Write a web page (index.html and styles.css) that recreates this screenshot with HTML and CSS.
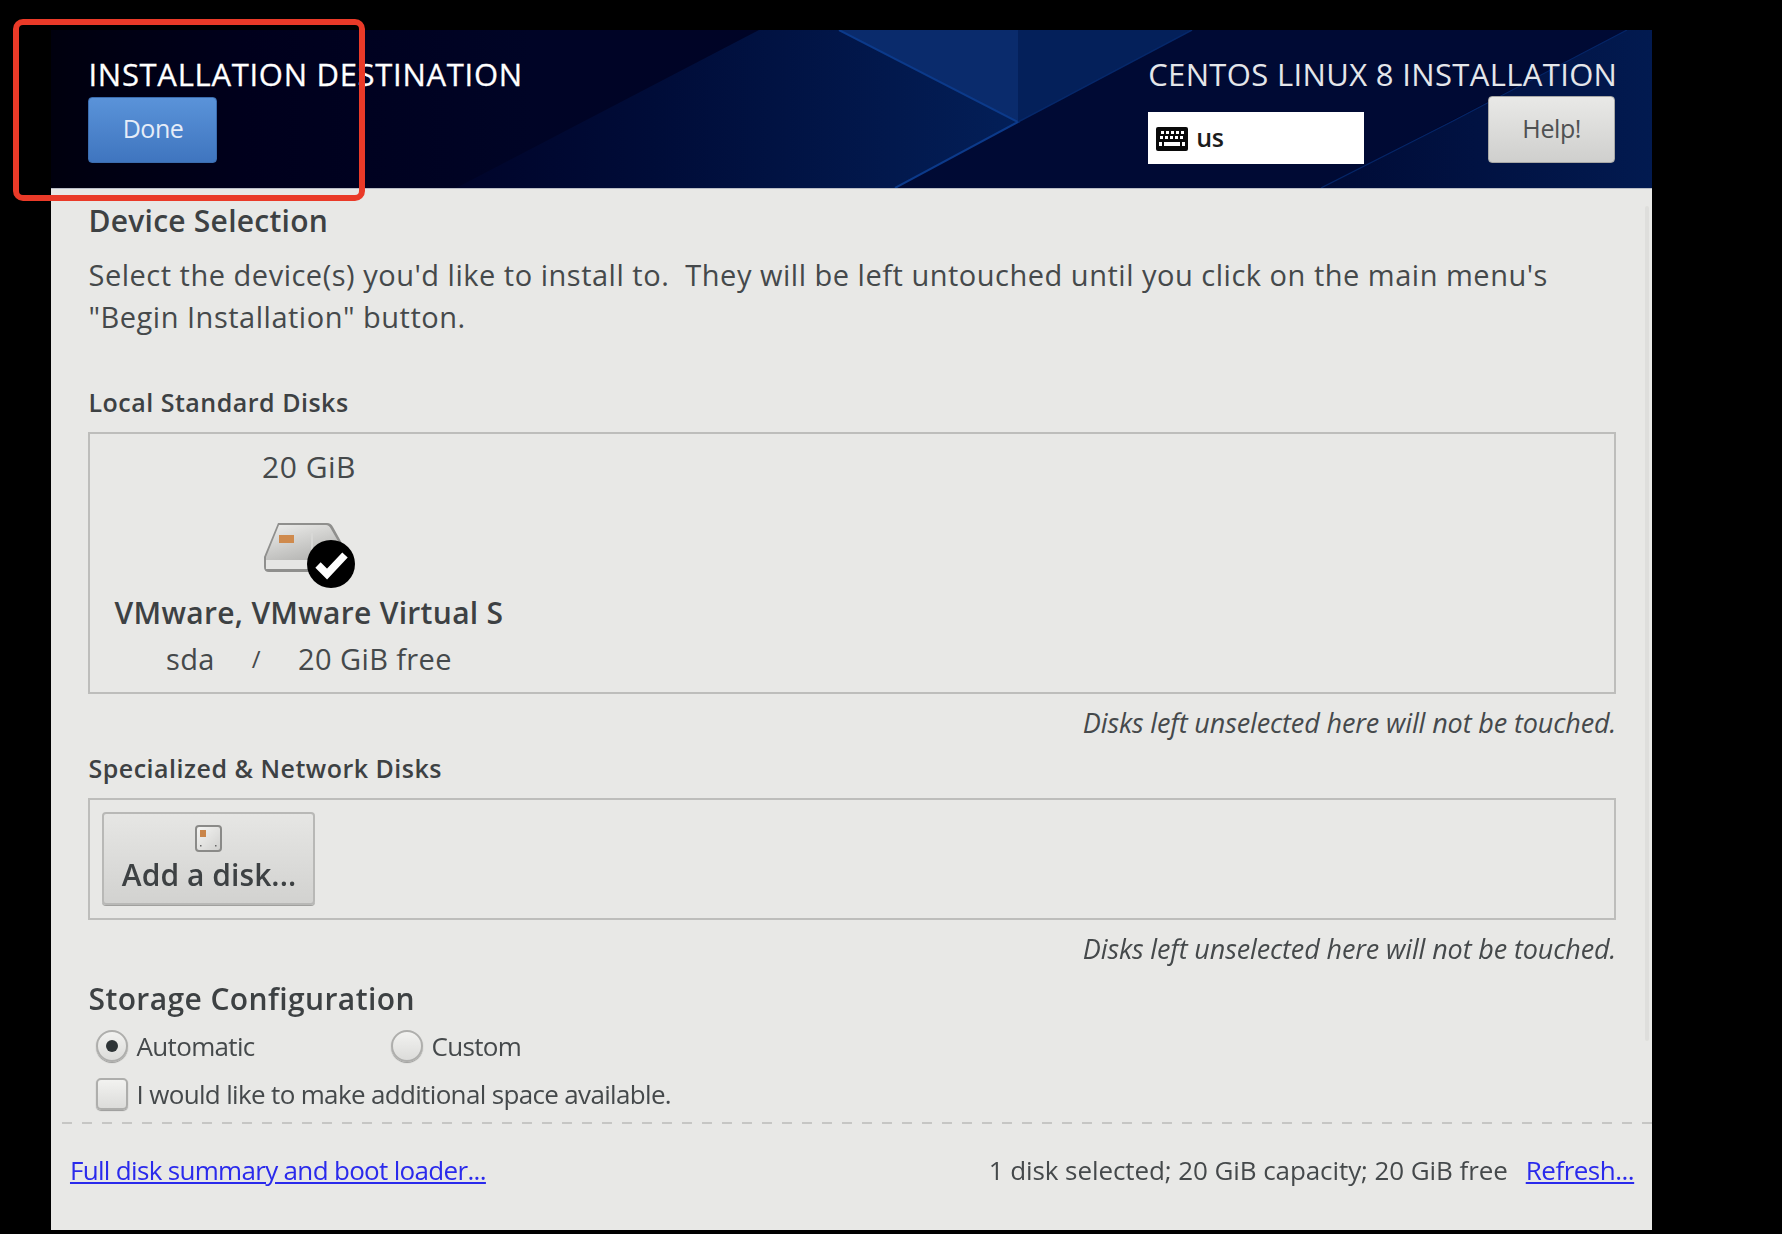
FILE: index.html
```html
<!DOCTYPE html>
<html lang="en">
<head>
<meta charset="utf-8">
<title>Installation Destination</title>
<link rel="stylesheet" href="styles.css">
</head>
<body>
<div class="window">
  <header class="topbar">
    <svg class="topbar-art" viewBox="0 0 1601 158" preserveAspectRatio="none" aria-hidden="true">
      <defs>
        <linearGradient id="bgGrad" x1="0" y1="0" x2="1" y2="0">
          <stop offset="0" stop-color="#00000e"/>
          <stop offset="0.12" stop-color="#00001c"/>
          <stop offset="0.3" stop-color="#000426"/>
          <stop offset="1" stop-color="#000426"/>
        </linearGradient>
        <linearGradient id="midGrad" x1="405" y1="0" x2="967" y2="0" gradientUnits="userSpaceOnUse">
          <stop offset="0" stop-color="#00042a"/>
          <stop offset="0.35" stop-color="#000c38"/>
          <stop offset="1" stop-color="#031f58"/>
        </linearGradient>
        <linearGradient id="rightGrad" x1="1270" y1="0" x2="1601" y2="0" gradientUnits="userSpaceOnUse">
          <stop offset="0" stop-color="#000b36"/>
          <stop offset="1" stop-color="#021a50"/>
        </linearGradient>
      </defs>
      <rect width="1601" height="158" fill="url(#bgGrad)"/>
      <polygon points="405,158 708,0 788,0 967,92 844,158" fill="url(#midGrad)"/>
      <polygon points="788,0 967,0 967,92" fill="#0a2b6c"/>
      <polygon points="967,0 1141,0 967,92" fill="#04205a"/>
      <polygon points="967,92 1141,0 1576,0 1270,158 844,158" fill="#000a34"/>
      <polygon points="1402,91 1576,0 1601,0 1601,158 1270,158" fill="url(#rightGrad)"/>
      <polyline points="788,0 967,92 844,158" fill="none" stroke="#0c3a8a" stroke-width="2"/>
      <line x1="967" y1="92" x2="1141" y2="0" stroke="#06286a" stroke-width="1.5"/>
      <polyline points="1576,0 1402,91 1270,158" fill="none" stroke="#052668" stroke-width="1.2"/>
    </svg>
    <div class="topbar-left">
      <h1 class="spoke-title">INSTALLATION DESTINATION</h1>
      <button class="btn btn-done">Done</button>
    </div>
    <div class="topbar-right">
      <div class="distro-title">CENTOS LINUX 8 INSTALLATION</div>
      <div class="topbar-controls">
        <div class="layout-box">
          <svg class="kbd-icon" viewBox="0 0 32 24" aria-hidden="true">
            <rect width="32" height="24" rx="2" fill="#0a0a0a"/>
            <g fill="#fff">
              <rect x="5" y="4" width="3" height="3"/><rect x="10" y="4" width="3" height="3"/><rect x="15" y="4" width="3" height="3"/><rect x="20" y="4" width="3" height="3"/><rect x="25" y="4" width="3" height="3"/>
              <rect x="4" y="9" width="3" height="3"/><rect x="9" y="9" width="3" height="3"/><rect x="14" y="9" width="3" height="3"/><rect x="19" y="9" width="3" height="3"/><rect x="24" y="9" width="3" height="3"/>
              <rect x="3" y="15" width="3" height="4"/><rect x="8" y="15" width="16" height="4"/><rect x="26" y="15" width="3" height="4"/>
            </g>
          </svg>
          <span class="layout-name">us</span>
        </div>
        <button class="btn btn-help">Help!</button>
      </div>
    </div>
  </header>

  <main class="panel">
    <div class="scrollbar"></div>
    <div class="panel-body">
      <h2 class="heading">Device Selection</h2>
      <p class="intro">Select the device(s) you'd like to install to.&nbsp; They will be left untouched until you click on the main menu's<br>"Begin Installation" button.</p>

      <h3 class="subheading first">Local Standard Disks</h3>
      <section class="disk-box local">
        <div class="disk">
          <div class="disk-size">20 GiB</div>
          <svg class="disk-icon" viewBox="0 0 92 68" aria-hidden="true">
            <defs>
              <linearGradient id="hdTop" x1="0" y1="0" x2="0.6" y2="1">
                <stop offset="0" stop-color="#eeeeec"/>
                <stop offset="1" stop-color="#b4b4b2"/>
              </linearGradient>
            </defs>
            <path d="M15 2 H64 Q68 2 70 6 L85 33 V46 Q85 51 80 51 H6 Q1 51 1 46 V36 Z" fill="#8f8f8d"/>
            <path d="M16 4 H63 Q66 4 68 8 L83 34 V39 H3 V36 Z" fill="url(#hdTop)"/>
            <rect x="3" y="39" width="80" height="9" fill="#e6e6e4"/>
            <rect x="16" y="14" width="15" height="8" fill="#cf8a4d"/>
            <rect x="48" y="12" width="2" height="18" fill="#d8d8d6"/>
            <circle cx="68" cy="43" r="24" fill="#000"/>
            <path d="M55 44 L64 53 L82 34" fill="none" stroke="#fff" stroke-width="7.5" stroke-linejoin="miter"/>
          </svg>
          <div class="disk-name">VMware, VMware Virtual S</div>
          <div class="disk-meta"><span>sda</span><span class="slash">/</span><span>20 GiB free</span></div>
        </div>
      </section>
      <p class="note">Disks left unselected here will not be touched.</p>

      <h3 class="subheading">Specialized &amp; Network Disks</h3>
      <section class="disk-box network">
        <button class="btn btn-add">
          <svg class="add-icon" viewBox="0 0 27 27" aria-hidden="true">
            <defs>
              <linearGradient id="addFace" x1="0" y1="0" x2="1" y2="1">
                <stop offset="0" stop-color="#f6f6f4"/>
                <stop offset="1" stop-color="#cfcfcd"/>
              </linearGradient>
            </defs>
            <rect x="1" y="1" width="25" height="25" rx="3" fill="url(#addFace)" stroke="#8a8a88" stroke-width="2"/>
            <rect x="5" y="5" width="6" height="7" fill="#c9854a"/>
            <rect x="5" y="20" width="1.5" height="1.5" fill="#666"/><rect x="20" y="20" width="1.5" height="1.5" fill="#666"/>
          </svg>
          <span>Add a disk...</span>
        </button>
      </section>
      <p class="note">Disks left unselected here will not be touched.</p>

      <h2 class="heading storage">Storage Configuration</h2>
      <div class="choice-row radios">
        <label class="choice automatic"><span class="radio checked"></span>Automatic</label>
        <label class="choice"><span class="radio"></span>Custom</label>
      </div>
      <div class="choice-row check">
        <label class="choice"><span class="checkbox"></span>I would like to make additional space available.</label>
      </div>
    </div>
    <div class="dashes"></div>
    <footer class="panel-footer">
      <a class="link" href="#">Full disk summary and boot loader...</a>
      <div class="summary">
        <span class="summary-text">1 disk selected; 20 GiB capacity; 20 GiB free</span>
        <a class="link refresh" href="#">Refresh...</a>
      </div>
    </footer>
  </main>
</div>
<div class="callout"></div>
</body>
</html>
```

FILE: styles.css
```css
* { box-sizing: border-box; }
html, body { margin: 0; height: 100%; background: #000; }
body {
  position: relative;
  overflow: hidden;
  padding: 30px 0 0 51.2px;
  font-family: "Open Sans", "Noto Sans", "Liberation Sans", sans-serif;
  color: #3a3e40;
}
.window {
  width: 1601px;
  height: 1200px;
  display: flex;
  flex-direction: column;
  filter: blur(0.55px);
}

/* top bar */
.topbar {
  position: relative;
  height: 158px;
  flex: none;
  display: flex;
  justify-content: space-between;
  padding: 27px 37px 0 37.3px;
  background: #00082c;
  overflow: hidden;
}
.topbar-art { position: absolute; left: 0; top: 0; width: 100%; height: 100%; }
.topbar-left, .topbar-right { position: relative; display: flex; flex-direction: column; }
.topbar-right { width: 467px; }
.spoke-title, .distro-title {
  margin: 0;
  font-size: 31px;
  font-weight: 400;
  line-height: 34px;
  color: #fff;
  white-space: nowrap;
}
.spoke-title { letter-spacing: 0.7px; -webkit-text-stroke: 0.3px #fff; }
.distro-title { color: #e4e6ea; letter-spacing: 0.35px; }
.topbar-controls { display: flex; justify-content: space-between; align-items: flex-start; margin-top: 5px; }
.btn {
  font-family: inherit;
  border-radius: 4px;
  padding: 0;
  cursor: pointer;
}
.btn-done {
  margin-top: 6px;
  width: 129px;
  height: 66px;
  font-size: 25px;
  letter-spacing: -0.5px;
  padding-bottom: 4px;
  color: #e6edf8;
  border: 1px solid #3b6cae;
  background: linear-gradient(#5a93d9, #3f75bf);
}
.btn-help {
  width: 127px;
  height: 67px;
  font-size: 25px;
  letter-spacing: -0.4px;
  padding-bottom: 4px;
  color: #4f5152;
  border: 1px solid #a8a8a6;
  background: linear-gradient(#e9e9e7, #cfcfcd);
}
.layout-box {
  margin-top: 16px;
  width: 216px;
  height: 52px;
  background: #fff;
  display: flex;
  align-items: center;
  padding: 0 0 0 8px;
  gap: 8px;
}
.kbd-icon { width: 32px; height: 24px; display: block; margin-top: 2px; }
.layout-name { font-size: 25px; font-weight: 600; color: #1c1c1c; line-height: 30px; letter-spacing: -0.4px; margin-top: -2px; }

/* panel */
.panel {
  position: relative;
  flex: 1;
  background: #e8e8e6;
  border-top: 1px solid #b9bdc6;
  display: flex;
  flex-direction: column;
}
.scrollbar {
  position: absolute;
  right: 3px;
  top: 17px;
  width: 4px;
  height: 835px;
  background: #dededc;
  border-radius: 2px;
}
.panel-body { padding: 15px 36px 0 37.3px; }
.heading { margin: 0; font-size: 30px; line-height: 34px; font-weight: 600; color: #3d4143; letter-spacing: 0.25px; }
.heading.storage { margin-top: 17px; line-height: 36px; font-size: 30px; letter-spacing: 0.4px; }
.intro { margin: 16px 0 0; font-size: 29px; line-height: 42px; color: #45494b; letter-spacing: 0.51px; }
.subheading { margin: 15px 0 0; font-size: 25px; line-height: 30px; font-weight: 600; color: #3d4143; letter-spacing: 0.5px; }
.subheading.first { margin-top: 49px; }
.disk-box { margin-top: 15px; border: 2px solid #bdbdbb; }
.disk-box.local { height: 262px; padding: 16px 0 0 25px; }
.disk-box.network { height: 122px; padding: 12px 0 0 12px; }
.disk { width: 387px; display: flex; flex-direction: column; align-items: center; }
.disk-size { font-size: 30px; line-height: 34px; color: #45494b; letter-spacing: 0.5px; }
.disk-icon { margin-top: 37px; margin-bottom: -2px; width: 92px; height: 68px; display: block; }
.disk-name { margin-top: 8px; font-size: 30px; line-height: 36px; font-weight: 600; color: #3d4143; white-space: nowrap; letter-spacing: 0.3px; }
.disk-meta { margin-top: 11px; font-size: 29px; line-height: 34px; color: #45494b; display: flex; gap: 37px; letter-spacing: 0.4px; }
.disk-meta .slash { font-size: 24px; }
.note { margin: 14px 0 0; text-align: right; font-size: 27px; line-height: 30px; font-style: italic; color: #45494b; letter-spacing: -0.13px; }
.btn-add {
  width: 213px;
  height: 93px;
  border: 2px solid #b8b8b6;
  background: linear-gradient(#e6e6e4, #d2d2d0);
  box-shadow: 0 1px 0 #a0a09e;
  display: flex;
  flex-direction: column;
  align-items: center;
  padding-top: 11px;
  font-size: 30px;
  font-weight: 600;
  line-height: 36px;
  color: #3d4143;
  letter-spacing: 0.06px;
}
.add-icon { width: 27px; height: 27px; display: block; margin-bottom: 5px; }

/* options */
.choice-row { display: flex; margin-left: 8px; }
.radios { margin-top: 12px; }
.check { margin-top: 14px; }
.choice { display: flex; align-items: center; gap: 8px; font-size: 26px; line-height: 34px; color: #45494b; white-space: nowrap; letter-spacing: -0.66px; }
.automatic { width: 295px; }
.radio, .checkbox {
  width: 32px;
  height: 32px;
  flex: none;
  border: 2px solid #aeaeac;
  background: linear-gradient(#f2f2f0, #dcdcda);
  box-shadow: 0 1px 1px #9a9a98;
}
.radio { border-radius: 50%; position: relative; }
.radio.checked::after {
  content: "";
  position: absolute;
  left: 8px;
  top: 8px;
  width: 12px;
  height: 12px;
  border-radius: 50%;
  background: #2e3436;
}
.checkbox { border-radius: 5px; }

/* footer */
.dashes {
  margin: 11px 0 0 10.8px;
  height: 2px;
  background: repeating-linear-gradient(90deg, #c6c6c4 0 10px, transparent 10px 20px);
}
.panel-footer {
  display: flex;
  justify-content: space-between;
  align-items: center;
  margin: 29px 18px 0 18.8px;
  font-size: 26px;
  line-height: 34px;
  letter-spacing: -0.68px;
}
.link { color: #2a2aec; text-decoration: underline; }
.refresh { letter-spacing: -0.5px; }
.summary { display: flex; gap: 18px; color: #45494b; }
.summary-text { letter-spacing: -0.08px; }

/* red callout drawn over the screenshot */
.callout {
  position: absolute;
  left: 13px;
  top: 19px;
  width: 352px;
  height: 182px;
  border: 6px solid #ea3a28;
  border-radius: 10px;
}
```
